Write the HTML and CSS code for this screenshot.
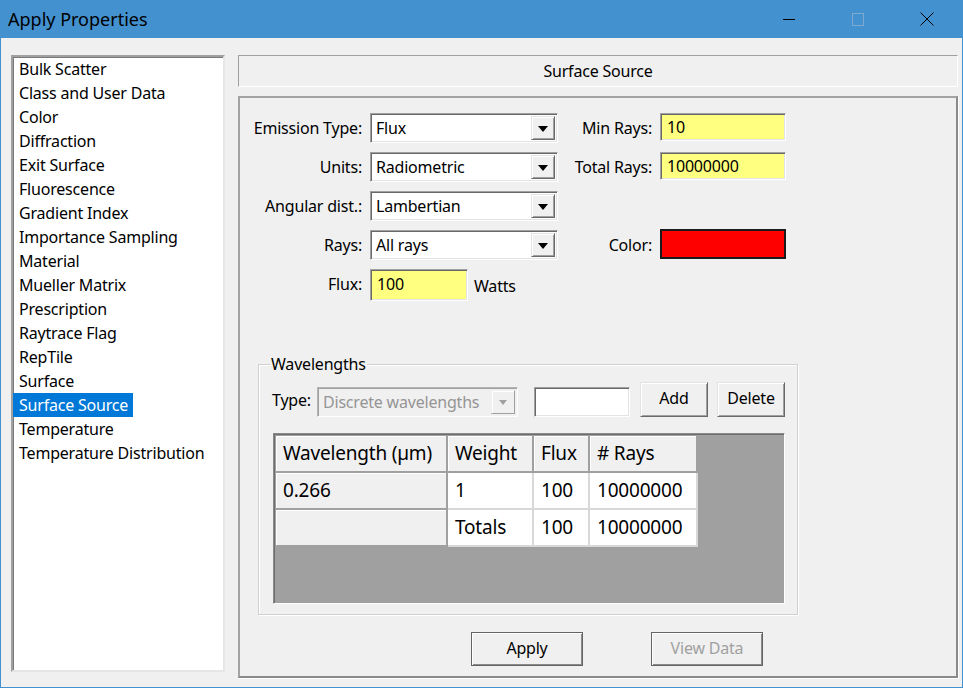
FILE: index.html
```html
<!DOCTYPE html>
<html>
<head>
<meta charset="utf-8">
<link rel="stylesheet" href="styles.css">
</head>
<body>
<div class="window">
  <div class="titlebar">
    <span class="title">Apply Properties</span>
    <div class="controls">
      <span class="ctl"><svg width="14" height="14" viewBox="0 0 14 14"><line x1="1" y1="7.5" x2="13" y2="7.5" stroke="#000" stroke-width="1"/></svg></span>
      <span class="ctl"><svg width="14" height="14" viewBox="0 0 14 14"><rect x="1.5" y="1.5" width="11" height="12" fill="none" stroke="#7fa9cf" stroke-width="1"/></svg></span>
      <span class="ctl"><svg width="16" height="16" viewBox="0 0 16 16"><path d="M1.5 1.5 L14.5 14.5 M14.5 1.5 L1.5 14.5" stroke="#000" stroke-width="1" fill="none"/></svg></span>
    </div>
  </div>
  <div class="main">
    <ul class="list">
      <li><span>Bulk Scatter</span></li>
      <li><span>Class and User Data</span></li>
      <li><span>Color</span></li>
      <li><span>Diffraction</span></li>
      <li><span>Exit Surface</span></li>
      <li><span>Fluorescence</span></li>
      <li><span>Gradient Index</span></li>
      <li><span>Importance Sampling</span></li>
      <li><span>Material</span></li>
      <li><span>Mueller Matrix</span></li>
      <li><span>Prescription</span></li>
      <li><span>Raytrace Flag</span></li>
      <li><span>RepTile</span></li>
      <li><span>Surface</span></li>
      <li class="selected"><span>Surface Source</span></li>
      <li><span>Temperature</span></li>
      <li><span>Temperature Distribution</span></li>
    </ul>
    <div class="right">
      <div class="header">Surface Source</div>
      <div class="panel">
        <div class="form">
          <label class="lbl">Emission Type:</label>
          <div class="select"><span class="val">Flux</span><span class="drop"><i class="tri"></i></span></div>
          <label class="lbl">Min Rays:</label>
          <div class="input yellow short">10</div>

          <label class="lbl">Units:</label>
          <div class="select"><span class="val">Radiometric</span><span class="drop"><i class="tri"></i></span></div>
          <label class="lbl">Total Rays:</label>
          <div class="input yellow short">10000000</div>

          <label class="lbl">Angular dist.:</label>
          <div class="select"><span class="val">Lambertian</span><span class="drop"><i class="tri"></i></span></div>
          <span></span>
          <span></span>

          <label class="lbl">Rays:</label>
          <div class="select"><span class="val">All rays</span><span class="drop"><i class="tri"></i></span></div>
          <label class="lbl">Color:</label>
          <div class="swatch"></div>

          <label class="lbl">Flux:</label>
          <div class="fluxrow"><div class="input yellow flux">100</div><span class="unit">Watts</span></div>
          <span></span>
          <span></span>
        </div>

        <fieldset class="group">
          <legend>Wavelengths</legend>
          <div class="wrow">
            <label class="typelbl">Type:</label>
            <div class="select disabled"><span class="val">Discrete wavelengths</span><span class="drop"><i class="tri"></i></span></div>
            <div class="input white wl"></div>
            <button class="btn small">Add</button>
            <button class="btn small">Delete</button>
          </div>
          <div class="grid">
            <table>
              <tr>
                <th class="c1">Wavelength (µm)</th>
                <th class="c2">Weight</th>
                <th class="c3">Flux</th>
                <th class="c4"># Rays</th>
              </tr>
              <tr>
                <th>0.266</th>
                <td>1</td>
                <td>100</td>
                <td>10000000</td>
              </tr>
              <tr>
                <th></th>
                <td>Totals</td>
                <td>100</td>
                <td>10000000</td>
              </tr>
            </table>
          </div>
        </fieldset>

        <div class="buttons">
          <button class="btn big">Apply</button>
          <button class="btn big off">View Data</button>
        </div>
      </div>
    </div>
  </div>
</div>
</body>
</html>
```

FILE: styles.css
```css
* { box-sizing: border-box; }
html, body {
  margin: 0;
  padding: 0;
  background: #f0f0f0;
}
body {
  font-family: "Noto Sans", "Open Sans", sans-serif;
  font-size: 16px;
  letter-spacing: -0.2px;
  color: #000;
}
.window {
  width: 963px;
  height: 688px;
  border: 1px solid #4391cf;
  border-top: none;
  background: #f0f0f0;
  overflow: hidden;
}
.titlebar {
  height: 38px;
  margin: 0 -1px;
  background: #4391cf;
  display: flex;
  align-items: center;
  justify-content: space-between;
}
.title {
  padding-left: 8px;
  font-size: 18px;
  letter-spacing: 0;
  line-height: 38px;
}
.controls {
  display: flex;
  height: 38px;
  padding-right: 1px;
}
.ctl {
  width: 69px;
  height: 38px;
  display: flex;
  align-items: center;
  justify-content: center;
}
.ctl:last-child { width: 70px; }

.main {
  display: flex;
  align-items: flex-start;
  gap: 13px;
  padding: 17px 4px 0 10px;
}
.list {
  list-style: none;
  margin: 0;
  padding: 0;
  width: 214px;
  height: 617px;
  background: #fff;
  border: 2px solid;
  border-color: #a0a0a0 #e6e6e6 #e6e6e6 #a0a0a0;
  box-shadow: inset 1px 1px 0 #7a7a7a;
}
.list li {
  height: 24px;
  line-height: 24px;
}
.list li span {
  display: inline-block;
  padding: 0 5px 0 6px;
  height: 24px;
}
.list li.selected span {
  background: #0078d7;
  color: #fff;
}

.right {
  width: 720px;
  display: flex;
  flex-direction: column;
  gap: 9px;
}
.header {
  height: 32px;
  border: 1px solid;
  border-color: #a0a0a0 #fff #fff #a0a0a0;
  text-align: center;
  line-height: 30px;
}
.panel {
  height: 582px;
  border: 2px solid;
  border-color: #a3a3a3 #8a8a8a #8a8a8a #a3a3a3;
  box-shadow: 1px 1px 0 #fff;
  padding: 15px 0 0 7px;
}

.form {
  display: grid;
  grid-template-columns: 115px 188px 86px 126px;
  grid-template-rows: 30px 30px 30px 30px 32px;
  column-gap: 8px;
  row-gap: 9px;
}
.lbl {
  text-align: right;
  line-height: 30px;
  white-space: nowrap;
}
.select {
  height: 30px;
  display: flex;
  align-items: stretch;
  background: #fff;
  border: 1px solid;
  border-color: #a0a0a0 #fff #fff #a0a0a0;
  box-shadow: inset 1px 1px 0 #696969, inset -1px -1px 0 #e3e3e3;
  padding: 1px;
}
.select .val {
  flex: 1;
  padding-left: 4px;
  line-height: 27px;
  white-space: nowrap;
  overflow: hidden;
}
.drop {
  width: 24px;
  margin: 1px 1px 1px 0;
  background: #f0f0f0;
  border: 1px solid;
  border-color: #e3e3e3 #696969 #696969 #e3e3e3;
  box-shadow: inset 1px 1px 0 #fff, inset -1px -1px 0 #a0a0a0;
  display: flex;
  align-items: center;
  justify-content: center;
}
.tri {
  width: 0;
  height: 0;
  border-left: 5px solid transparent;
  border-right: 5px solid transparent;
  border-top: 6px solid #000;
  margin-top: 1px;
}
.select.disabled {
  background: #f0f0f0;
  border-color: #b4b4b4 #fff #fff #b4b4b4;
  box-shadow: inset 1px 1px 0 #a0a0a0;
  color: #959595;
}
.select.disabled .drop {
  border-color: #f0f0f0 #a0a0a0 #a0a0a0 #f0f0f0;
  box-shadow: inset 1px 1px 0 #fff;
}
.select.disabled .tri {
  border-top-color: #a0a0a0;
  border-left-width: 4px;
  border-right-width: 4px;
  border-top-width: 5px;
}

.input {
  border: 1px solid;
  border-color: #a0a0a0 #fff #fff #a0a0a0;
  box-shadow: inset 1px 1px 0 #696969, inset -1px -1px 0 #e3e3e3;
  padding-left: 6px;
  white-space: nowrap;
}
.yellow { background: #ffff80; }
.white { background: #fff; }
.short {
  height: 28px;
  line-height: 26px;
  align-self: start;
}
.fluxrow {
  display: flex;
  align-items: center;
  gap: 6px;
}
.flux {
  width: 98px;
  height: 32px;
  line-height: 29px;
}
.unit { margin-top: 1px; }
.swatch {
  height: 30px;
  margin-top: -1px;
  background: #ff0000;
  border: 2px solid #1a1a1a;
}

.group {
  margin: 54px 0 0 11px;
  width: 540px;
  padding: 9px 12px 10px 13px;
  border: 1px solid #d0d0d0;
  box-shadow: inset 1px 1px 0 #fff, 1px 1px 0 #fff;
  min-width: 0;
}
.group legend {
  padding: 0 1px;
  margin-left: -2px;
  line-height: 18px;
}
.wrow {
  display: flex;
  align-items: flex-end;
  height: 35px;
}
.typelbl {
  line-height: 22px;
  margin-bottom: 6px;
  width: 45px;
}
.wrow .select {
  width: 201px;
}
.wl {
  width: 96px;
  height: 30px;
  margin-left: 16px;
}
.btn {
  font: inherit;
  letter-spacing: -0.2px;
  color: #000;
  background: #f0f0f0;
  border: 1px solid;
  border-color: #e3e3e3 #696969 #696969 #e3e3e3;
  box-shadow: inset 1px 1px 0 #fff, inset -1px -1px 0 #a0a0a0;
  padding: 0;
}
.small {
  width: 68px;
  height: 35px;
  margin-left: 10px;
  padding-bottom: 3px;
}
.small + .small { margin-left: 9px; }

.grid {
  margin: 16px 0 0 1px;
  width: 512px;
  height: 171px;
  background: #a0a0a0;
  border: 1px solid;
  border-color: #8a8a8a #fff #fff #8a8a8a;
  box-shadow: inset 1px 1px 0 #6e6e6e;
  padding: 2px 0 0 2px;
}
.grid table {
  border-collapse: separate;
  border-spacing: 0;
  font-size: 19px;
  letter-spacing: -0.2px;
}
.grid th, .grid td {
  height: 37px;
  padding: 0 0 2px 7px;
  text-align: left;
  font-weight: normal;
  white-space: nowrap;
}
.grid th {
  background: #f0f0f0;
  border-right: 2px solid #a0a0a0;
  border-bottom: 2px solid #a0a0a0;
  box-shadow: inset 1px 1px 0 #fff;
}
.grid td {
  background: #fff;
  border-right: 2px solid #d8d8d8;
  border-bottom: 2px solid #d8d8d8;
}
.c1 { width: 172px; }
.c2 { width: 86px; }
.c3 { width: 56px; }
.c4 { width: 108px; }

.buttons {
  display: flex;
  gap: 68px;
  margin: 17px 0 0 224px;
}
.big {
  width: 112px;
  height: 34px;
  border: 1px solid #646464;
  box-shadow: inset 1px 1px 0 #fff, inset -1px -1px 0 #8a8a8a;
  padding-bottom: 2px;
}
.off { color: #a0a0a0; }
```
